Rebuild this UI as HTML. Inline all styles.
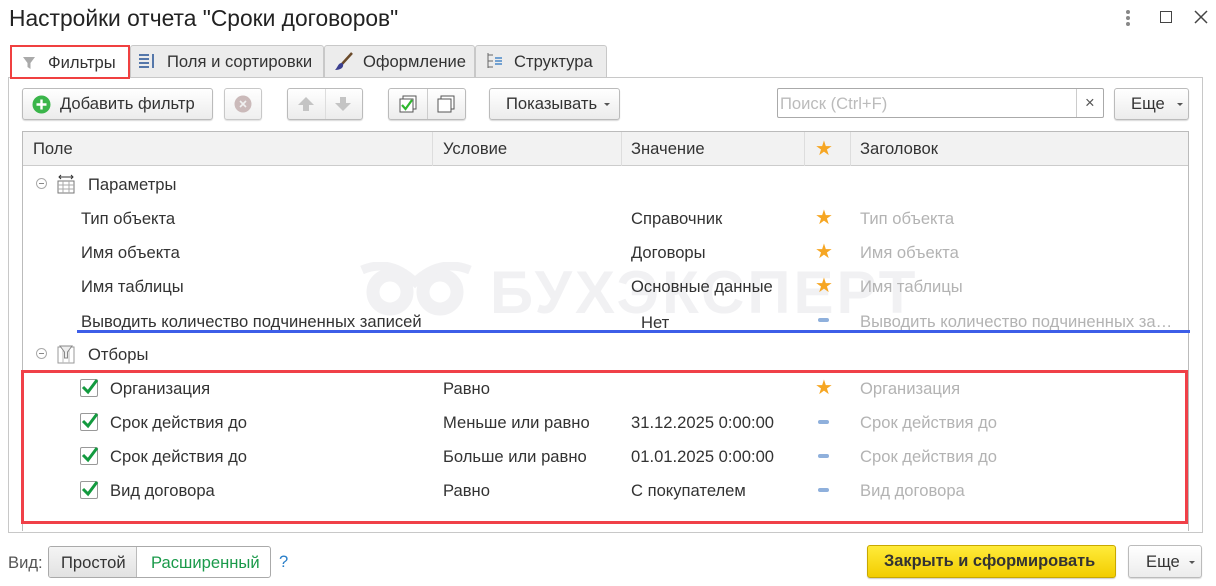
<!DOCTYPE html>
<html><head><meta charset="utf-8"><style>
*{box-sizing:border-box;margin:0;padding:0}
body{width:1216px;height:586px;background:#fff;font-family:"Liberation Sans",Arial,sans-serif;font-size:16.6px;color:#333;position:relative;overflow:hidden}
.a{position:absolute;white-space:nowrap}
.btn{position:absolute;border:1px solid #bbb;border-radius:3px;background:linear-gradient(#fff,#ececec);box-shadow:0 1px 1px rgba(0,0,0,.15)}
.tab{position:absolute;top:45px;height:32px;border:1px solid #c8c8c8;border-bottom:none;background:#ececec;border-radius:3px 3px 0 0}
.g{color:#b3b3b3}
.star{color:#f6a623;font-size:20px}
.dash{position:absolute;width:11px;height:4px;border-radius:2px;background:#8fb0dc}
.cb{position:absolute;width:18px;height:18px;border:1px solid #999;border-radius:2px;background:#fff}
.tri{position:absolute;width:0;height:0;border-left:3px solid transparent;border-right:3px solid transparent;border-top:3px solid #555}
</style></head><body>
<div class="a" style="left:9px;top:5px;font-size:22.8px;color:#222">Настройки отчета "Сроки договоров"</div>
<div class="a" style="left:1126px;top:10px;width:4px;font-size:0"><div style="width:4px;height:4px;background:#888;border-radius:2px;margin-bottom:2px"></div><div style="width:4px;height:4px;background:#888;border-radius:2px;margin-bottom:2px"></div><div style="width:4px;height:4px;background:#888;border-radius:2px"></div></div>
<div class="a" style="left:1160px;top:11px;width:12px;height:12px;border:1.5px solid #444"></div>
<svg class="a" style="left:1194px;top:10px" width="14" height="14"><path d="M1 1L13 13M13 1L1 13" stroke="#444" stroke-width="1.5"/></svg>

<div class="a" style="left:8px;top:77px;width:1195px;height:456px;border:1px solid #c8c8c8"></div>
<div class="tab" style="left:10px;width:120px;background:#fff;height:34px;border:2px solid #f04040;border-radius:0;z-index:2">
<svg class="a" style="left:10px;top:9px" width="14" height="14"><path d="M1 1H13L8.5 7V13L5.5 11V7Z" fill="#aaa"/></svg>
<span class="a" style="left:36px;top:6px">Фильтры</span></div>
<div class="tab" style="left:130px;width:194px">
<svg class="a" style="left:8px;top:6px" width="20" height="18"><g fill="#5577aa"><rect x="0" y="2" width="10" height="2"/><rect x="0" y="6" width="10" height="2"/><rect x="0" y="10" width="10" height="2"/><rect x="0" y="14" width="10" height="2"/><rect x="13" y="2" width="2" height="14"/></g></svg>
<span class="a" style="left:36px;top:6px">Поля и сортировки</span></div>
<div class="tab" style="left:324px;width:151px">
<svg class="a" style="left:9px;top:6px" width="20" height="20"><path d="M18 1L8 12" stroke="#6a4a2a" stroke-width="2.5"/><path d="M8 11C4 11 4 15 1 18C6 18 10 16 9 12Z" fill="#3b3f8f"/></svg>
<span class="a" style="left:38px;top:6px">Оформление</span></div>
<div class="tab" style="left:475px;width:132px">
<svg class="a" style="left:10px;top:6px" width="18" height="18"><path d="M2 1V16M2 3H7M2 9H7M2 15H7" stroke="#666" fill="none"/><path d="M9 6H16M9 9H16M9 12H16" stroke="#4a88c8" stroke-width="1.5"/></svg>
<span class="a" style="left:38px;top:6px">Структура</span></div>

<div class="btn" style="left:22px;top:88px;width:191px;height:32px">
<svg class="a" style="left:9px;top:6px" width="19" height="19"><circle cx="9.5" cy="9.5" r="9" fill="#3ab54a"/><path d="M9.5 4.5V14.5M4.5 9.5H14.5" stroke="#fff" stroke-width="2.4"/></svg>
<span class="a" style="left:37px;top:5px">Добавить фильтр</span></div>
<div class="btn" style="left:224px;top:88px;width:38px;height:32px;opacity:.8"><svg class="a" style="left:9px;top:6px" width="18" height="18"><circle cx="9" cy="9" r="8.5" fill="#bfa9a9"/><path d="M6 6L12 12M12 6L6 12" stroke="#eee" stroke-width="1.6"/></svg></div>
<div class="btn" style="left:287px;top:88px;width:76px;height:32px"><div class="a" style="left:37px;top:0;width:1px;height:30px;background:#ddd"></div>
<svg class="a" style="left:9px;top:7px" width="18" height="16"><path d="M9 1L17 9H12V15H6V9H1Z" fill="#c4c4c4"/></svg>
<svg class="a" style="left:46px;top:7px" width="18" height="16"><path d="M9 15L17 7H12V1H6V7H1Z" fill="#c4c4c4"/></svg></div>
<div class="btn" style="left:388px;top:88px;width:78px;height:32px"><div class="a" style="left:38px;top:0;width:1px;height:30px;background:#ccc"></div>
<svg class="a" style="left:9px;top:6px" width="20" height="20"><rect x="5" y="1" width="13" height="13" fill="#fff" stroke="#555"/><rect x="2" y="4" width="13" height="13" fill="#fff" stroke="#555"/><path d="M4 10L7.5 14L14 5" stroke="#2eb82e" stroke-width="2.2" fill="none"/></svg>
<svg class="a" style="left:47px;top:6px" width="20" height="20"><rect x="5" y="1" width="13" height="13" fill="#fff" stroke="#555"/><rect x="2" y="4" width="13" height="13" fill="#fff" stroke="#555"/></svg></div>
<div class="btn" style="left:489px;top:88px;width:131px;height:32px"><span class="a" style="left:16px;top:5px">Показывать</span><div class="tri" style="left:114px;top:14px"></div></div>
<div class="a" style="left:777px;top:88px;width:327px;height:30px;border:1px solid #aaa;border-radius:2px"><span class="a" style="left:2px;top:5px;color:#bbb">Поиск (Ctrl+F)</span><div class="a" style="left:298px;top:0;width:1px;height:28px;background:#ccc"></div><span class="a" style="left:307px;top:4px;color:#555">×</span></div>
<div class="btn" style="left:1114px;top:88px;width:75px;height:32px"><span class="a" style="left:16px;top:5px">Еще</span><div class="tri" style="left:62px;top:14px"></div></div>

<div class="a" style="left:22px;top:131px;width:1167px;height:400px;border:1px solid #bbb;border-bottom:none"></div>
<div class="a" style="left:23px;top:132px;width:1165px;height:34px;background:#f2f2f2;border-bottom:1px solid #ccc"></div>
<div class="a" style="left:432px;top:132px;width:1px;height:34px;background:#ddd"></div>
<div class="a" style="left:621px;top:132px;width:1px;height:34px;background:#ddd"></div>
<div class="a" style="left:804px;top:132px;width:1px;height:34px;background:#ddd"></div>
<div class="a" style="left:850px;top:132px;width:1px;height:34px;background:#ddd"></div>
<span class="a" style="left:33px;top:139px">Поле</span>
<span class="a" style="left:443px;top:139px">Условие</span>
<span class="a" style="left:631px;top:139px">Значение</span>
<span class="a star" style="left:815px;top:136px">★</span>
<span class="a" style="left:860px;top:139px">Заголовок</span>

<svg class="a" style="left:360px;top:262px" width="112" height="54"><g fill="none" stroke="#f1f1f3" stroke-width="13"><circle cx="30" cy="30" r="17"/><circle cx="80" cy="30" r="17"/></g><path d="M2 8Q30 -4 55 20Q80 -4 110 8" stroke="#f1f1f3" stroke-width="9" fill="none"/></svg>
<div class="a" style="left:490px;top:258px;font-size:60px;font-weight:bold;color:#f1f1f3;letter-spacing:3px">БУХЭКСПЕРТ</div>

<div class="a" style="left:36px;top:178px;width:11px;height:11px;border:1px solid #aaa;border-radius:50%;font-size:0"><div style="margin:4px 2px;height:1px;background:#888"></div></div>
<svg class="a" style="left:57px;top:174px" width="18" height="20"><path d="M2 3H16M4 1L2 3L4 5M14 1L16 3L14 5" stroke="#333" fill="none"/><rect x="1" y="7" width="16" height="12" fill="#fff" stroke="#777"/><path d="M6 7V19M12 7V19M1 11H17M1 15H17" stroke="#aaa"/></svg>
<span class="a" style="left:88px;top:175px">Параметры</span>

<span class="a" style="left:81px;top:209px">Тип объекта</span><span class="a" style="left:631px;top:209px">Справочник</span><span class="a star" style="left:815px;top:205px">★</span><span class="a g" style="left:860px;top:209px">Тип объекта</span>
<span class="a" style="left:81px;top:243px">Имя объекта</span><span class="a" style="left:631px;top:243px">Договоры</span><span class="a star" style="left:815px;top:239px">★</span><span class="a g" style="left:860px;top:243px">Имя объекта</span>
<span class="a" style="left:81px;top:277px">Имя таблицы</span><span class="a" style="left:631px;top:277px">Основные данные</span><span class="a star" style="left:815px;top:273px">★</span><span class="a g" style="left:860px;top:277px">Имя таблицы</span>
<span class="a" style="left:81px;top:312px">Выводить количество подчиненных записей</span><span class="a" style="left:641px;top:313px">Нет</span><div class="dash" style="left:818px;top:318px"></div><span class="a g" style="left:860px;top:312px">Выводить количество подчиненных за…</span>
<div class="a" style="left:77px;top:330px;width:1113px;height:3px;background:#3d5ee8"></div>

<div class="a" style="left:36px;top:348px;width:11px;height:11px;border:1px solid #aaa;border-radius:50%;font-size:0"><div style="margin:4px 2px;height:1px;background:#888"></div></div>
<svg class="a" style="left:57px;top:344px" width="18" height="20"><rect x="1" y="3" width="16" height="16" fill="#fff" stroke="#999"/><path d="M6 3V19M12 3V19" stroke="#bbb"/><path d="M3 2H15L10.5 8V14H7.5V8Z" fill="#eee" stroke="#888"/></svg>
<span class="a" style="left:88px;top:345px">Отборы</span>

<div class="a" style="left:21px;top:370px;width:1167px;height:154px;border:3px solid #f04048"></div>

<div class="cb" style="left:80px;top:379px"></div><svg class="a" style="left:80px;top:377px" width="20" height="20"><path d="M3 10L8 15L17 3" stroke="#139a3f" stroke-width="3" fill="none"/></svg>
<span class="a" style="left:110px;top:379px">Организация</span><span class="a" style="left:443px;top:379px">Равно</span><span class="a star" style="left:815px;top:375px">★</span><span class="a g" style="left:860px;top:379px">Организация</span>
<div class="cb" style="left:80px;top:413px"></div><svg class="a" style="left:80px;top:411px" width="20" height="20"><path d="M3 10L8 15L17 3" stroke="#139a3f" stroke-width="3" fill="none"/></svg>
<span class="a" style="left:110px;top:413px">Срок действия до</span><span class="a" style="left:443px;top:413px">Меньше или равно</span><span class="a" style="left:631px;top:413px">31.12.2025 0:00:00</span><div class="dash" style="left:818px;top:420px"></div><span class="a g" style="left:860px;top:413px">Срок действия до</span>
<div class="cb" style="left:80px;top:447px"></div><svg class="a" style="left:80px;top:445px" width="20" height="20"><path d="M3 10L8 15L17 3" stroke="#139a3f" stroke-width="3" fill="none"/></svg>
<span class="a" style="left:110px;top:447px">Срок действия до</span><span class="a" style="left:443px;top:447px">Больше или равно</span><span class="a" style="left:631px;top:447px">01.01.2025 0:00:00</span><div class="dash" style="left:818px;top:454px"></div><span class="a g" style="left:860px;top:447px">Срок действия до</span>
<div class="cb" style="left:80px;top:481px"></div><svg class="a" style="left:80px;top:479px" width="20" height="20"><path d="M3 10L8 15L17 3" stroke="#139a3f" stroke-width="3" fill="none"/></svg>
<span class="a" style="left:110px;top:481px">Вид договора</span><span class="a" style="left:443px;top:481px">Равно</span><span class="a" style="left:631px;top:481px">С покупателем</span><div class="dash" style="left:818px;top:488px"></div><span class="a g" style="left:860px;top:481px">Вид договора</span>

<span class="a" style="left:8px;top:553px;color:#555">Вид:</span>
<div class="a" style="left:48px;top:546px;width:223px;height:32px;border:1px solid #aaa;border-radius:3px;overflow:hidden">
<div class="a" style="left:0;top:0;width:88px;height:30px;background:linear-gradient(#f4f4f4,#e2e2e2);border-right:1px solid #bbb"></div>
<span class="a" style="left:12px;top:6px">Простой</span><span class="a" style="left:102px;top:6px;color:#1a9a4a">Расширенный</span></div>
<span class="a" style="left:279px;top:552px;color:#2a7fc9">?</span>
<div class="a" style="left:867px;top:545px;width:249px;height:33px;border:1px solid #c8a800;border-radius:3px;background:linear-gradient(#ffeb3a,#f2cd00);box-shadow:0 1px 1px rgba(0,0,0,.2)"><span class="a" style="left:16px;top:6px;font-weight:bold;color:#333;font-size:16.4px">Закрыть и сформировать</span></div>
<div class="btn" style="left:1128px;top:545px;width:74px;height:33px"><span class="a" style="left:17px;top:6px">Еще</span><div class="tri" style="left:60px;top:15px"></div></div>
</body></html>
